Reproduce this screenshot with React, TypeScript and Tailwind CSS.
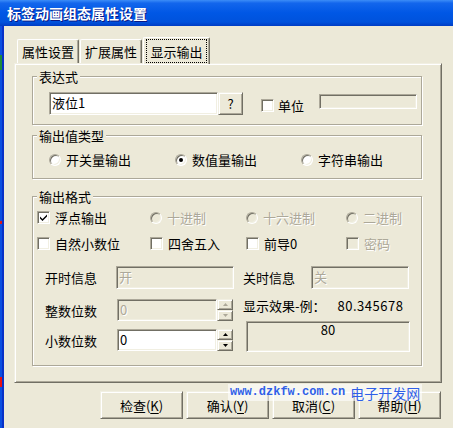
import * as React from "react";

const font = "font-['Noto_Sans_CJK_SC','Liberation_Sans',sans-serif]";
const sunken =
    "border border-t-[#ACA899] border-l-[#ACA899] border-b-white border-r-white shadow-[inset_1px_1px_0_#716F64,inset_-1px_-1px_0_#F1EFE2]";
const raised =
    "border border-t-[#F1EFE2] border-l-[#F1EFE2] border-b-[#716F64] border-r-[#716F64] shadow-[inset_1px_1px_0_#fff,inset_-1px_-1px_0_#ACA899]";
const grayText = "text-[#ACA899] [text-shadow:1px_1px_0_#fff]";

function Check({ checked, disabled }: { checked?: boolean; disabled?: boolean }) {
    return (
        <span
            className={`flex h-[13px] w-[13px] shrink-0 items-center justify-center ${sunken} ${
                disabled ? "bg-[#ECE9D8]" : "bg-white"
            }`}
        >
            {checked && (
                <svg width="7" height="7" viewBox="0 0 7 7">
                    <path d="M0 2.5 L2.5 5 L7 0.5 L7 2.5 L2.5 7 L0 4.5 Z" fill="#000" />
                </svg>
            )}
        </span>
    );
}

function Radio({ checked, disabled }: { checked?: boolean; disabled?: boolean }) {
    return (
        <span
            className={`flex h-[12px] w-[12px] shrink-0 items-center justify-center rounded-full ${sunken} ${
                disabled ? "bg-[#ECE9D8]" : "bg-white"
            }`}
        >
            {checked && <span className="h-[4px] w-[4px] rounded-full bg-black" />}
        </span>
    );
}

function Option({
    kind,
    label,
    checked,
    disabled,
    className = "",
}: {
    kind: "check" | "radio";
    label: string;
    checked?: boolean;
    disabled?: boolean;
    className?: string;
}) {
    return (
        <div className={`flex items-center gap-[5px] ${className}`}>
            {kind === "check" ? <Check checked={checked} disabled={disabled} /> : <Radio checked={checked} disabled={disabled} />}
            <span className={disabled ? grayText : ""}>{label}</span>
        </div>
    );
}

function Group({ title, className = "", children }: { title: string; className?: string; children: React.ReactNode }) {
    return (
        <div className={`flex w-[390px] flex-col border border-[#ACA899] shadow-[inset_1px_1px_0_#fff,1px_1px_0_#fff] ${className}`}>
            <span className="-mt-[7px] ml-[4px] w-fit bg-[#ECE9D8] px-[2px] leading-[13px]">{title}</span>
            {children}
        </div>
    );
}

function Spin({ disabled }: { disabled?: boolean }) {
    const c = disabled ? "#ACA899" : "#000";
    return (
        <div className="flex h-[22px] w-[16px] shrink-0 flex-col">
            <div className={`flex h-[11px] items-center justify-center bg-[#ECE9D8] ${raised}`}>
                <svg width="5" height="3" viewBox="0 0 5 3">
                    <path d="M2.5 0 L5 3 L0 3 Z" fill={c} />
                </svg>
            </div>
            <div className={`flex h-[11px] items-center justify-center bg-[#ECE9D8] ${raised}`}>
                <svg width="5" height="3" viewBox="0 0 5 3">
                    <path d="M0 0 L5 0 L2.5 3 Z" fill={c} />
                </svg>
            </div>
        </div>
    );
}

function Tab({ children, active }: { children: React.ReactNode; active?: boolean }) {
    if (active) {
        return (
            <div className="relative z-10 -mb-px ml-px flex h-[27px] w-[67px] rounded-t-[2px] border-l border-t border-r border-white border-r-[#716F64] bg-[#ECE9D8] px-[2px] pb-[1px] pt-[1px] shadow-[inset_-1px_0_0_#ACA899]">
                <div className="flex flex-1 items-center justify-center border border-dotted border-black">{children}</div>
            </div>
        );
    }
    return (
        <div className="ml-px flex h-[24px] w-[62px] items-center justify-center rounded-t-[2px] border-l border-t border-r border-white border-r-[#716F64] shadow-[inset_-1px_0_0_#ACA899]">
            {children}
        </div>
    );
}

function Btn({ label, hot }: { label: string; hot: string }) {
    return (
        <div className={`flex h-[28px] w-[83px] items-center justify-center bg-[#ECE9D8] ${raised}`}>
            {label}(<span className="underline underline-offset-2">{hot}</span>)
        </div>
    );
}

export default function App() {
    return (
        <div className={`relative flex h-[428px] w-[453px] flex-col overflow-hidden bg-[#ECE9D8] text-[13px] leading-[13px] text-black ${font}`}>
            <div className="flex h-[26px] shrink-0 items-center bg-[linear-gradient(180deg,#3C8DF7_0%,#1366EC_12%,#0057E5_50%,#0052DC_85%,#003CC4_100%)] pl-[7px]">
                <span className="text-[14px] font-bold text-white [text-shadow:1px_1px_0_#0A1883]">标签动画组态属性设置</span>
            </div>

            <div className="flex flex-1">
                <div className="flex w-[4px] shrink-0">
                    <div className="flex w-[2px] flex-col bg-[#0B4FE0]">
                        <div className="h-[29px]" />
                        <div className="h-[15px] bg-[#1E8A3A]" />
                        <div className="h-[151px]" />
                        <div className="h-[3px] bg-[#D81818]" />
                        <div className="h-[153px]" />
                        <div className="h-[10px] bg-[#E81010]" />
                    </div>
                    <div className="w-[2px] bg-[#0831C8]" />
                </div>

                <div className="flex flex-1 flex-col">
                    <div className="ml-[12px] mt-[11px] flex items-end">
                        <Tab>属性设置</Tab>
                        <Tab>扩展属性</Tab>
                        <Tab active>显示输出</Tab>
                    </div>

                    <div className={`ml-[10px] flex w-[428px] flex-col bg-[#ECE9D8] pb-[16px] pl-[17px] pt-[12px] ${raised}`}>
                        <Group title="表达式">
                            <div className="ml-[16px] mt-[9px] flex items-start pb-[9px]">
                                <div className={`h-[23px] w-[169px] bg-white pl-[2px] pt-[3px] ${sunken}`}>液位1</div>
                                <div className={`flex h-[23px] w-[25px] items-center justify-center ${raised}`}>?</div>
                                <div className="ml-[18px] mt-[7px] flex items-center gap-[4px]">
                                    <Check />
                                    <span>单位</span>
                                </div>
                                <div className={`ml-[15px] mt-[2px] h-[15px] w-[98px] ${sunken}`} />
                            </div>
                        </Group>

                        <Group title="输出值类型" className="mt-[10px]">
                            <div className="ml-[16px] mt-[11px] flex pb-[12px]">
                                <Option kind="radio" label="开关量输出" className="w-[126px]" />
                                <Option kind="radio" label="数值量输出" checked className="w-[126px]" />
                                <Option kind="radio" label="字符串输出" />
                            </div>
                        </Group>

                        <Group title="输出格式" className="mt-[17px]">
                            <div className="ml-[4px] flex flex-col pb-[13px]">
                                <div className="mt-[8px] flex">
                                    <Option kind="check" label="浮点输出" checked className="w-[113px]" />
                                    <Option kind="radio" label="十进制" disabled className="w-[96px]" />
                                    <Option kind="radio" label="十六进制" disabled className="w-[100px]" />
                                    <Option kind="radio" label="二进制" disabled />
                                </div>
                                <div className="mt-[13px] flex">
                                    <Option kind="check" label="自然小数位" className="w-[113px]" />
                                    <Option kind="check" label="四舍五入" className="w-[96px]" />
                                    <Option kind="check" label="前导0" className="w-[100px]" />
                                    <Option kind="check" label="密码" disabled />
                                </div>
                                <div className="mt-[16px] flex items-center">
                                    <span className="ml-[8px] w-[71px]">开时信息</span>
                                    <div className={`h-[23px] w-[118px] pl-[2px] pt-[3px] ${sunken} ${grayText}`}>开</div>
                                    <span className="ml-[9px] w-[68px]">关时信息</span>
                                    <div className={`h-[23px] w-[98px] pl-[2px] pt-[3px] ${sunken} ${grayText}`}>关</div>
                                </div>
                                <div className="mt-[10px] flex">
                                    <div className="flex flex-col gap-[8px]">
                                        <div className="flex items-center">
                                            <span className="ml-[8px] w-[72px]">整数位数</span>
                                            <div className={`h-[22px] w-[100px] pl-[2px] pt-[3px] ${sunken} ${grayText}`}>0</div>
                                            <Spin disabled />
                                        </div>
                                        <div className="flex items-center">
                                            <span className="ml-[8px] w-[72px]">小数位数</span>
                                            <div className={`h-[22px] w-[100px] bg-white pl-[2px] pt-[3px] ${sunken}`}>0</div>
                                            <Spin />
                                        </div>
                                    </div>
                                    <div className="ml-[10px] flex flex-col">
                                        <div className="flex">
                                            <span>显示效果-例：</span>
                                            <span className="ml-[12px] tracking-[0.5px]">80.345678</span>
                                        </div>
                                        <div className={`ml-[3px] mt-[9px] flex h-[31px] w-[164px] justify-center pt-[1px] ${sunken}`}>80</div>
                                    </div>
                                </div>
                            </div>
                        </Group>
                    </div>

                    <div className="ml-[96px] mt-[8px] flex gap-[3px]">
                        <Btn label="检查" hot="K" />
                        <Btn label="确认" hot="Y" />
                        <Btn label="取消" hot="C" />
                        <Btn label="帮助" hot="H" />
                    </div>
                </div>
            </div>

            <div className="absolute left-[228px] top-[384px] flex h-[17px] items-center gap-[5px] bg-white/60 px-[2px] text-[#2F5FE8]">
                <span className="font-['Liberation_Mono',monospace] text-[12px] font-bold">www.dzkfw.com.cn</span>
                <span className="text-[14px] leading-[14px]">电子开发网</span>
            </div>
        </div>
    );
}
